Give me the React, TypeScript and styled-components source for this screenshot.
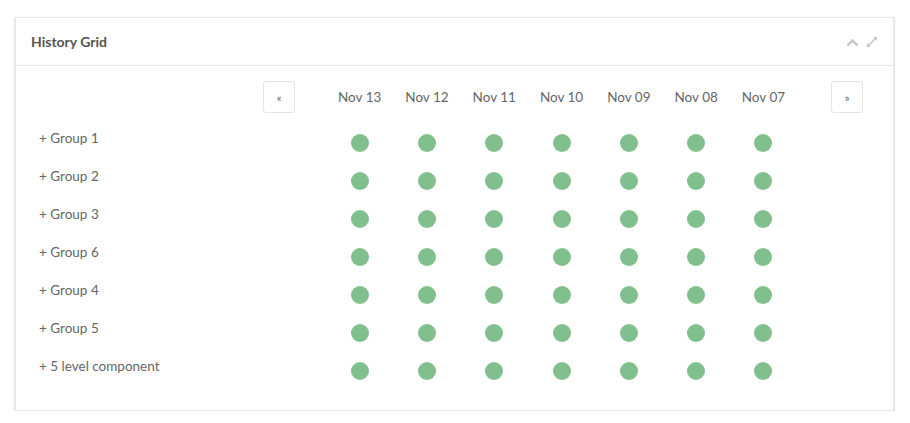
import React from 'react';
import styled, { createGlobalStyle } from 'styled-components';

const dates = ['Nov 13', 'Nov 12', 'Nov 11', 'Nov 10', 'Nov 09', 'Nov 08', 'Nov 07'];
const groups = ['+ Group 1', '+ Group 2', '+ Group 3', '+ Group 6', '+ Group 4', '+ Group 5', '+ 5 level component'];

function App() {
    return (
        <Page>
            <GlobalStyle/>
            <Card>
                <Header>
                    <Title>History Grid</Title>
                    <Tools>
                        <svg width="13" height="9" viewBox="0 0 13 9">
                            <path d="M1.5 7.5 L6.5 2.5 L11.5 7.5" fill="none" stroke="#c8c8c8" strokeWidth="2.6"/>
                        </svg>
                        <svg width="12" height="12" viewBox="0 0 12 12">
                            <path d="M7 1 H11 V5 Z M1 7 V11 H5 Z" fill="#c8c8c8"/>
                            <path d="M9.5 2.5 L2.5 9.5" stroke="#c8c8c8" strokeWidth="1.6"/>
                        </svg>
                    </Tools>
                </Header>
                <Body>
                    <span/>
                    <NavButton>&laquo;</NavButton>
                    <span/>
                    {dates.map(d => <DateLabel key={d}>{d}</DateLabel>)}
                    <span/>
                    <NavButton>&raquo;</NavButton>
                    {groups.map(g => (
                        <React.Fragment key={g}>
                            <RowLabel>{g}</RowLabel>
                            <span/>
                            <span/>
                            {dates.map(d => (
                                <Cell key={d}><Dot/></Cell>
                            ))}
                            <span/>
                            <span/>
                        </React.Fragment>
                    ))}
                </Body>
            </Card>
        </Page>
    );
}

export default App;

const GlobalStyle = createGlobalStyle`
  body {
    margin: 0;
    background: #fff;
    font-family: Lato, "Open Sans", sans-serif;
  }
`

const Page = styled.div`
  padding: 17px 16px 0 15px;
`

const Card = styled.div`
  background: #fff;
  border: 1px solid #e8e8e8;
  box-shadow: 0 1px 2px rgba(0, 0, 0, 0.3);
`

const Header = styled.div`
  display: flex;
  align-items: center;
  justify-content: space-between;
  height: 47px;
  padding: 0 15px;
  border-bottom: 1px solid #e6e6e6;
`

const Title = styled.h3`
  margin: 0;
  font-size: 14px;
  font-weight: 700;
  color: #555;
`

const Tools = styled.div`
  display: flex;
  align-items: center;
  gap: 7px;
  margin-top: 1px;
`

const Body = styled.div`
  display: grid;
  grid-template-columns: 232px 32px 31px repeat(7, 67.3px) 34px 32px;
  grid-template-rows: 43px;
  grid-auto-rows: 38px;
  padding: 15px 30px 20px 15px;
`

const NavButton = styled.button`
  align-self: start;
  width: 32px;
  height: 32px;
  padding: 0;
  background: #fff;
  border: 1px solid #e3e3e3;
  border-radius: 3px;
  font-family: inherit;
  font-size: 11px;
  color: #666;
`

const DateLabel = styled.div`
  align-self: start;
  display: flex;
  align-items: center;
  justify-content: center;
  font-size: 13.5px;
  color: #666;
  height: 32px;
`

const RowLabel = styled.div`
  padding: 5px 0 0 8px;
  font-size: 13.5px;
  line-height: 18px;
  color: #666;
  white-space: nowrap;
`

const Cell = styled.div`
  display: flex;
  align-items: center;
  justify-content: center;
`

const Dot = styled.span`
  width: 18px;
  height: 18px;
  border-radius: 50%;
  background: #82bf8f;
`
